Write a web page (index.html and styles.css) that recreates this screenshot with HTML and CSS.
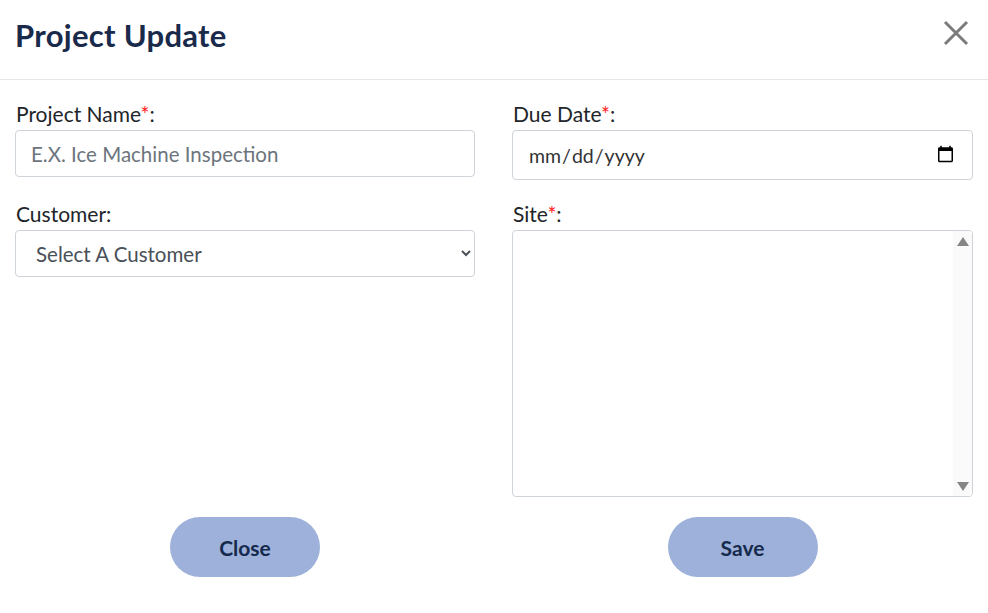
FILE: index.html
```html
<!DOCTYPE html>
<html lang="en">
<head>
<meta charset="utf-8">
<title>Project Update</title>
<link rel="stylesheet" href="styles.css">
</head>
<body>
<div class="modal">
  <header class="modal-header">
    <h1 class="modal-title">Project Update</h1>
    <button class="close-x" aria-label="Close">
      <svg width="26" height="26" viewBox="0 0 26 26"><path d="M2 2 L24 24 M24 2 L2 24" stroke="#7b7b7b" stroke-width="3" fill="none" stroke-linecap="butt"/></svg>
    </button>
  </header>
  <div class="modal-body">
    <div class="col">
      <div class="field">
        <label class="label">Project Name<span class="req">*</span>:</label>
        <input class="control" type="text" placeholder="E.X. Ice Machine Inspection">
      </div>
      <div class="field">
        <label class="label">Customer:</label>
        <select class="control select">
          <option>Select A Customer</option>
        </select>
      </div>
      <div class="spacer"></div>
      <div class="btn-row"><button class="btn">Close</button></div>
    </div>
    <div class="col">
      <div class="field field-date">
        <label class="label">Due Date<span class="req">*</span>:</label>
        <input class="control date" type="date">
      </div>
      <div class="field">
        <label class="label">Site<span class="req">*</span>:</label>
        <div class="listbox">
          <div class="list-content"></div>
          <div class="scrollbar">
            <span class="arrow up"></span>
            <span class="arrow down"></span>
          </div>
        </div>
      </div>
      <div class="btn-row"><button class="btn">Save</button></div>
    </div>
  </div>
</div>
</body>
</html>
```

FILE: styles.css
```css
* { box-sizing: border-box; }
html, body { margin: 0; padding: 0; background: #fff; }
body {
  font-family: Lato, "Open Sans", "Liberation Sans", sans-serif;
  color: #212529;
  width: 988px;
  height: 613px;
  overflow: hidden;
}
.modal { width: 988px; }
.modal-header {
  height: 80px;
  border-bottom: 1px solid #e6e6e6;
  display: flex;
  align-items: center;
  justify-content: space-between;
  padding: 0 19px 0 15px;
}
.modal-title {
  margin: 0;
  font-size: 31px;
  font-weight: 700;
  color: #1a2a4b;
  letter-spacing: 0.3px;
  padding-bottom: 10px;
}
.close-x {
  border: 0;
  background: transparent;
  padding: 0;
  width: 26px;
  height: 26px;
  margin-bottom: 13px;
  cursor: pointer;
}
.close-x svg { display: block; }
.modal-body {
  display: grid;
  grid-template-columns: 460px 461px;
  column-gap: 37px;
  padding: 22px 15px 0 15px;
}
.col { display: flex; flex-direction: column; }
.field { display: flex; flex-direction: column; margin-bottom: 25px; }
.field-date { margin-bottom: 22px; }
.label {
  font-size: 21px;
  line-height: 24px;
  margin: 0 0 4px 1px;
  color: #212529;
}
.req { color: #ff1a1a; }
.control {
  font-family: Lato, "Open Sans", "Liberation Sans", sans-serif;
  font-size: 20.5px;
  color: #495057;
  height: 47px;
  border: 1px solid #ced4da;
  border-radius: 4px;
  padding: 0 15px;
  background: #fff;
  outline: none;
  width: 100%;
}
.control::placeholder { color: #6c757d; }
.date { height: 50px; color: #333; font-size: 19.5px; }
.select { color: #495057; padding: 0 12px 0 16px; }
.listbox {
  height: 267px;
  border: 1px solid #ced4da;
  border-radius: 4px;
  display: flex;
  overflow: hidden;
}
.list-content { flex: 1; }
.scrollbar {
  width: 19px;
  background: #fafafa;
  display: flex;
  flex-direction: column;
  justify-content: space-between;
  align-items: center;
  padding: 6px 0 5px;
}
.arrow {
  width: 0; height: 0;
  border-left: 6px solid transparent;
  border-right: 6px solid transparent;
}
.arrow.up { border-bottom: 9px solid #858585; }
.arrow.down { border-top: 9px solid #858585; }
.spacer { flex: 1; }
.btn-row { display: flex; justify-content: center; margin-top: 20px; }
.col .field:nth-child(2) { margin-bottom: 0; }
.btn {
  width: 150px;
  height: 60px;
  border: 0;
  border-radius: 30px;
  background: #9db1da;
  color: #162a4d;
  font-family: Lato, "Open Sans", "Liberation Sans", sans-serif;
  font-size: 21px;
  font-weight: 700;
  cursor: pointer;
}
```
